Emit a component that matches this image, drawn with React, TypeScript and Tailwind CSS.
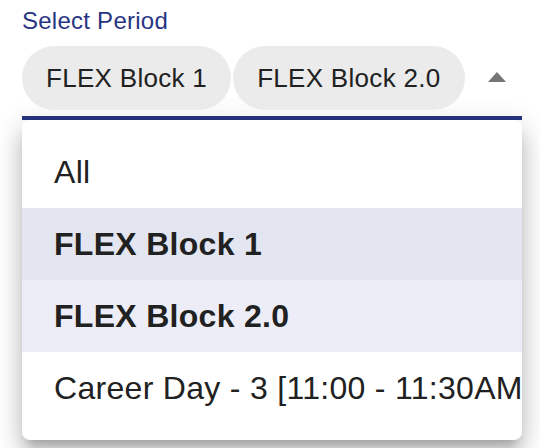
const periods = [
  { label: "All", selected: false, focused: false },
  { label: "FLEX Block 1", selected: true, focused: true },
  { label: "FLEX Block 2.0", selected: true, focused: false },
  { label: "Career Day - 3 [11:00 - 11:30AM]", selected: false, focused: false },
];

function Chip({ label }: { label: string }) {
  return (
    <div className="h-[64px] shrink-0 rounded-full bg-[#ebebeb] px-[24px] text-[26px] leading-[64px] tracking-[0.3px] text-[#212121] whitespace-nowrap">
      {label}
    </div>
  );
}

export default function App() {
  const chips = periods.filter((p) => p.selected);

  return (
    <div
      className="w-[540px] h-[448px] overflow-hidden bg-white pl-[22px] pr-[18px]"
      style={{ fontFamily: '"Liberation Sans", Arial, sans-serif' }}
    >
      {/* Label */}
      <div className="pt-[7px] text-[24px] leading-[28px] tracking-[0.25px] text-[#283583]">Select Period</div>

      {/* Select input */}
      <div className="mt-[11px] flex items-center gap-[2px]">
        {chips.map((c) => (
          <Chip key={c.label} label={c.label} />
        ))}
        <svg className="ml-auto mr-[16px] mb-[2px]" width="18" height="10" viewBox="0 0 18 10">
          <polygon points="9,0 18,10 0,10" fill="#757575" />
        </svg>
      </div>
      <div className="mt-[6px] h-[4px] bg-[#283583]" />

      {/* Menu */}
      <div className="rounded-lg bg-white py-[16px] overflow-hidden shadow-[0px_10px_10px_-6px_rgba(0,0,0,0.2),0px_16px_20px_2px_rgba(0,0,0,0.14),0px_6px_28px_4px_rgba(0,0,0,0.12)]">
        {periods.map((p) => (
          <div
            key={p.label}
            className={
              "h-[72px] px-[32px] text-[32px] leading-[72px] tracking-[0.3px] text-[#212121] whitespace-nowrap overflow-hidden " +
              (p.focused ? "bg-[#e3e6f0] font-bold" : p.selected ? "bg-[#ecedf6] font-bold" : "")
            }
          >
            {p.label}
          </div>
        ))}
      </div>
    </div>
  );
}
